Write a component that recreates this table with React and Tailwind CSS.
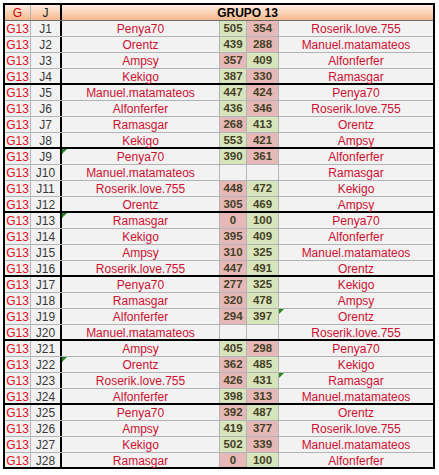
import React from 'react';

const rows = [
  ['J1', 'Penya70', 505, 354, 'Roserik.love.755'],
  ['J2', 'Orentz', 439, 288, 'Manuel.matamateos'],
  ['J3', 'Ampsy', 357, 409, 'Alfonferfer'],
  ['J4', 'Kekigo', 387, 330, 'Ramasgar'],
  ['J5', 'Manuel.matamateos', 447, 424, 'Penya70'],
  ['J6', 'Alfonferfer', 436, 346, 'Roserik.love.755'],
  ['J7', 'Ramasgar', 268, 413, 'Orentz'],
  ['J8', 'Kekigo', 553, 421, 'Ampsy'],
  ['J9', 'Penya70', 390, 361, 'Alfonferfer', 'left'],
  ['J10', 'Manuel.matamateos', null, null, 'Ramasgar'],
  ['J11', 'Roserik.love.755', 448, 472, 'Kekigo'],
  ['J12', 'Orentz', 305, 469, 'Ampsy'],
  ['J13', 'Ramasgar', 0, 100, 'Penya70', 'left'],
  ['J14', 'Kekigo', 395, 409, 'Alfonferfer'],
  ['J15', 'Ampsy', 310, 325, 'Manuel.matamateos'],
  ['J16', 'Roserik.love.755', 447, 491, 'Orentz'],
  ['J17', 'Penya70', 277, 325, 'Kekigo'],
  ['J18', 'Ramasgar', 320, 478, 'Ampsy'],
  ['J19', 'Alfonferfer', 294, 397, 'Orentz', 'right'],
  ['J20', 'Manuel.matamateos', null, null, 'Roserik.love.755'],
  ['J21', 'Ampsy', 405, 298, 'Penya70'],
  ['J22', 'Orentz', 362, 485, 'Kekigo', 'left'],
  ['J23', 'Roserik.love.755', 426, 431, 'Ramasgar', 'right'],
  ['J24', 'Alfonferfer', 398, 313, 'Manuel.matamateos'],
  ['J25', 'Penya70', 392, 487, 'Orentz'],
  ['J26', 'Ampsy', 419, 377, 'Roserik.love.755'],
  ['J27', 'Kekigo', 502, 339, 'Manuel.matamateos'],
  ['J28', 'Ramasgar', 0, 100, 'Alfonferfer'],
];

// little green corner flag, like excel's error marker
const Marker = () => (
  <span className="absolute left-0 top-0 w-0 h-0 border-t-[5px] border-t-[#1e8a1e] border-r-[5px] border-r-transparent" />
);

const Score = ({ value, win, last }) => {
  const bg = value === null ? 'bg-[#f2f2f2]' : win ? 'bg-[#d8e4bc]' : 'bg-[#e6b8b7]';
  return (
    <div className={`${last ? 'w-[32px]' : 'w-[27px]'} h-full shrink-0 border-r border-[#b3b3b3] ${bg} flex items-center justify-center pt-px font-bold text-[11.5px] text-[#443f25]`}>
      {value}
    </div>
  );
};

const Row = ({ r, i }) => {
  const [j, home, a, b, away, mark] = r;
  const isLast = i === rows.length - 1;
  const groupEnd = i % 4 === 3 && !isLast;
  const border = isLast ? 'h-[14px]' : groupEnd ? 'h-4 border-b-2 border-black' : 'h-4 border-b border-[#b3b3b3]';
  return (
    <div className={`flex box-border ${border}`}>
      <div className="w-[26px] shrink-0 border-r border-[#b3b3b3] flex items-center justify-center pt-px text-[#e0101c]">G13</div>
      <div className="w-[31px] shrink-0 border-r-2 border-black flex items-center justify-center pt-px text-[#3a3a3a]">{j}</div>
      <div className="relative w-[158px] shrink-0 border-r border-[#b3b3b3] flex items-center justify-center pt-px text-[#cc1030]">
        {mark === 'left' && <Marker />}
        {home}
      </div>
      <Score value={a} win={a !== null && a > b} />
      <Score value={b} win={b !== null && b > a} last />
      <div className="relative flex-1 flex items-center justify-center pt-px text-[#cc1030]">
        {mark === 'right' && <Marker />}
        {away}
      </div>
    </div>
  );
};

export default function App() {
  return (
    <div className="w-[439px] h-[475px] bg-white pt-[3px] pl-[3px] font-['Liberation_Sans',Arial,sans-serif] text-[12px] leading-none">
      <div className="w-[432px] border-2 border-black bg-[#f2f2f2] box-border">
        <div className="flex h-4 box-border border-b border-[#6b6b6b] bg-gradient-to-b from-[#fdeee4] to-[#f5b88a]">
          <div className="w-[26px] shrink-0 border-r border-[#b3b3b3] flex items-center justify-center text-[#cc0000]">G</div>
          <div className="w-[31px] shrink-0 border-r-2 border-black flex items-center justify-center text-[#222]">J</div>
          <div className="flex-1 flex items-center justify-center font-bold text-black">GRUPO 13</div>
        </div>
        {rows.map((r, i) => (
          <Row key={r[0]} r={r} i={i} />
        ))}
      </div>
    </div>
  );
}
